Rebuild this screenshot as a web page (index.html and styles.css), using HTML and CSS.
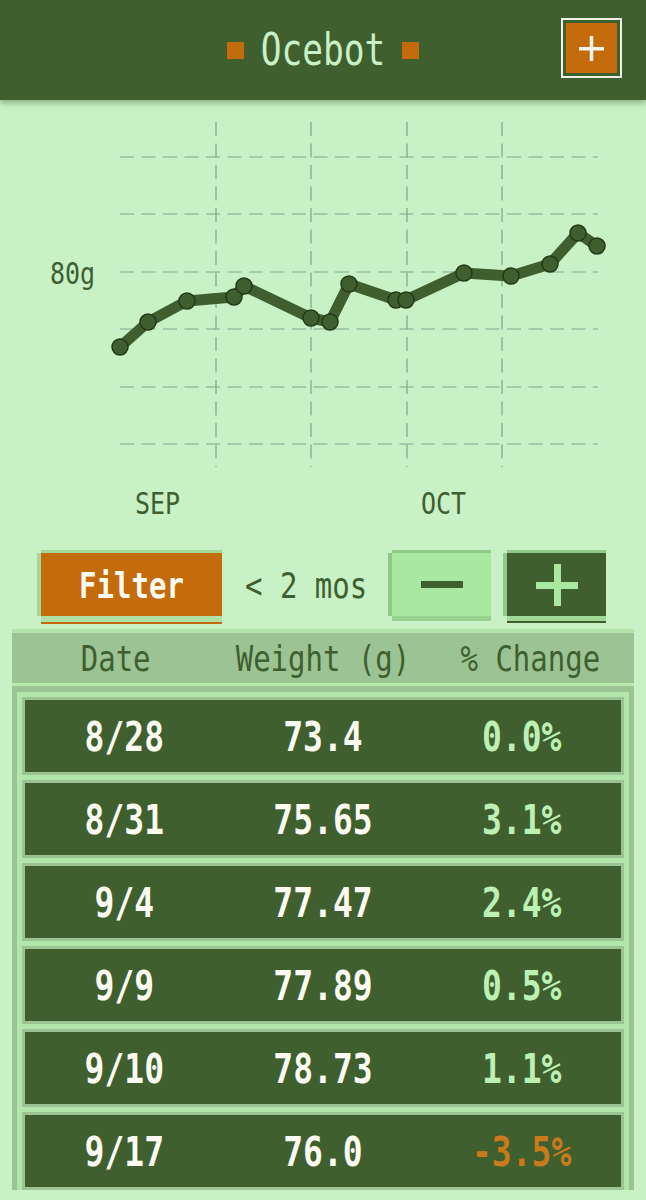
FILE: index.html
```html
<!DOCTYPE html>
<html lang="en">
<head>
    <meta charset="UTF-8">
    <meta name="viewport" content="width=device-width, initial-scale=1.0">
    <title>Ocebot</title>
    <link rel="stylesheet" href="styles.css">
</head>
<body>
    <header class="topbar">
        <div class="title">
            <span class="square"></span>
            <h1 class="title-text">Ocebot</h1>
            <span class="square"></span>
        </div>
        <button class="add-btn" type="button">
            <svg width="25" height="25" viewBox="0 0 25 25">
                <rect x="0" y="11" width="25" height="3.5" fill="#f4f4ec"/>
                <rect x="10.75" y="0" width="3.5" height="25" fill="#f4f4ec"/>
            </svg>
        </button>
    </header>

    <section class="chart">
        <svg width="646" height="448" viewBox="0 100 646 448">
            <g class="grid">
                <line x1="120" y1="157" x2="598" y2="157"/>
                <line x1="120" y1="214" x2="598" y2="214"/>
                <line x1="120" y1="272" x2="598" y2="272"/>
                <line x1="120" y1="329" x2="598" y2="329"/>
                <line x1="120" y1="387" x2="598" y2="387"/>
                <line x1="120" y1="444" x2="598" y2="444"/>
                <line x1="216" y1="122" x2="216" y2="467"/>
                <line x1="311" y1="122" x2="311" y2="467"/>
                <line x1="407" y1="122" x2="407" y2="467"/>
                <line x1="502" y1="122" x2="502" y2="467"/>
            </g>
            <text class="axis" transform="translate(50 284) scale(1 1.2)">80g</text>
            <text class="axis" transform="translate(135 514) scale(1 1.2)">SEP</text>
            <text class="axis" transform="translate(421 514) scale(1 1.2)">OCT</text>
            <polyline class="trend" points="120,347 148,322 187,301 234,297 244,286 311,318 330,322 349,284 396,300 406,300 464,273 511,276 550,264 578,233 597,246"/>
            <g class="dots">
                <circle cx="120" cy="347" r="8"/>
                <circle cx="148" cy="322" r="8"/>
                <circle cx="187" cy="301" r="8"/>
                <circle cx="234" cy="297" r="8"/>
                <circle cx="244" cy="286" r="8"/>
                <circle cx="311" cy="318" r="8"/>
                <circle cx="330" cy="322" r="8"/>
                <circle cx="349" cy="284" r="8"/>
                <circle cx="396" cy="300" r="8"/>
                <circle cx="406" cy="300" r="8"/>
                <circle cx="464" cy="273" r="8"/>
                <circle cx="511" cy="276" r="8"/>
                <circle cx="550" cy="264" r="8"/>
                <circle cx="578" cy="233" r="8"/>
                <circle cx="597" cy="246" r="8"/>
            </g>
        </svg>
    </section>

    <div class="controls">
        <button class="btn filter-btn" type="button"><span class="tall">Filter</span></button>
        <span class="range tall">&lt; 2 mos</span>
        <button class="btn minus-btn" type="button">
            <svg width="42" height="7" viewBox="0 0 42 7"><rect width="42" height="7" fill="#3f5f2f"/></svg>
        </button>
        <button class="btn plus-btn" type="button">
            <svg width="42" height="42" viewBox="0 0 42 42">
                <rect x="0" y="18" width="42" height="7" fill="#a8e8a0"/>
                <rect x="18" y="0" width="7" height="42" fill="#a8e8a0"/>
            </svg>
        </button>
    </div>

    <div class="table">
        <div class="thead">
            <span class="tall">Date</span>
            <span class="tall">Weight (g)</span>
            <span class="tall">% Change</span>
        </div>
        <div class="tbody">
            <div class="row">
                <span class="tall">8/28</span>
                <span class="tall">73.4</span>
                <span class="tall pct">0.0%</span>
            </div>
            <div class="row">
                <span class="tall">8/31</span>
                <span class="tall">75.65</span>
                <span class="tall pct">3.1%</span>
            </div>
            <div class="row">
                <span class="tall">9/4</span>
                <span class="tall">77.47</span>
                <span class="tall pct">2.4%</span>
            </div>
            <div class="row">
                <span class="tall">9/9</span>
                <span class="tall">77.89</span>
                <span class="tall pct">0.5%</span>
            </div>
            <div class="row">
                <span class="tall">9/10</span>
                <span class="tall">78.73</span>
                <span class="tall pct">1.1%</span>
            </div>
            <div class="row">
                <span class="tall">9/17</span>
                <span class="tall">76.0</span>
                <span class="tall pct neg">-3.5%</span>
            </div>
        </div>
    </div>
</body>
</html>
```

FILE: styles.css
```css
body {
    margin: 0;
    background-color: #c8f1c6;
    font-family: "DejaVu Sans Mono", monospace;
    color: #3f5f2f;
}
.tall {
    display: inline-block;
    transform: scaleY(1.25);
}
.topbar {
    position: relative;
    z-index: 1;
    height: 100px;
    display: grid;
    grid-template-columns: 1fr auto 1fr;
    align-items: center;
    background-color: #3f5f2f;
    box-shadow: 0 3px 6px rgba(30, 60, 20, 0.35);
}
.title {
    grid-column: 2;
    display: flex;
    align-items: center;
    gap: 17px;
}
.square {
    width: 17px;
    height: 17px;
    background-color: #c46c0c;
}
.title-text {
    margin: 0;
    font-size: 34.5px;
    font-weight: normal;
    line-height: 1;
    color: #c8f1c6;
    display: inline-block;
    transform: scaleY(1.27);
}
.add-btn {
    grid-column: 3;
    justify-self: end;
    margin: -4px 24px 0 0;
    box-sizing: border-box;
    width: 61px;
    height: 60px;
    padding: 0;
    border: 2px solid #eef2e6;
    background-color: #c46c0c;
    box-shadow: inset 0 0 0 3px #3f5f2f;
    display: flex;
    align-items: center;
    justify-content: center;
}
.chart svg {
    display: block;
}
.grid line {
    stroke: #7fa48c;
    stroke-width: 1.2;
    stroke-dasharray: 14 7.5;
}
.axis {
    font-family: "DejaVu Sans Mono", monospace;
    font-size: 25px;
    fill: #3f5f2f;
}
.trend {
    fill: none;
    stroke: #3f5f2f;
    stroke-width: 11;
    stroke-linejoin: round;
    stroke-linecap: round;
}
.dots circle {
    fill: #3f5f2f;
    stroke: #223a18;
    stroke-width: 1.5;
}
.controls {
    display: flex;
    align-items: center;
    padding: 5px 0 0 41px;
}
.btn {
    box-sizing: border-box;
    height: 63px;
    padding: 0;
    border: none;
    font-family: inherit;
    display: flex;
    align-items: center;
    justify-content: center;
}
.filter-btn {
    width: 181px;
    background-color: #c46c0c;
    color: #fbfbf2;
    font-size: 29px;
    font-weight: bold;
    box-shadow: -4px 0 0 #a2d89a, 0 -3px 0 #a2d89a, 0 6px 0 #b0e2a6, 0 8px 0 #c46c0c;
}
.range {
    margin-left: 23px;
    font-size: 29px;
}
.minus-btn {
    margin-left: 25px;
    width: 99px;
    background-color: #a8e8a0;
    box-shadow: -4px 0 0 #90c888, 0 -3px 0 #90c888, 0 5px 0 #98d090;
}
.plus-btn {
    margin-left: 16px;
    width: 99px;
    background-color: #3f5f2f;
    box-shadow: -4px 0 0 #90c888, 0 -3px 0 #90c888, 0 5px 0 #a0d898, 0 7px 0 #3f5f2f;
}
.table {
    margin: 13px 12px 0;
}
.thead {
    height: 50px;
    display: grid;
    grid-template-columns: repeat(3, 1fr);
    align-items: center;
    text-align: center;
    background-color: #9bc393;
    border-top: 4px solid #b2e4aa;
    border-bottom: 3px solid #b8eab0;
    font-size: 29px;
}
.tbody {
    background-color: #9bc393;
    padding: 14px 13px 3px;
    display: flex;
    flex-direction: column;
    gap: 11px;
}
.row {
    height: 72px;
    display: grid;
    grid-template-columns: repeat(3, 1fr);
    align-items: center;
    text-align: center;
    background-color: #3f5f2f;
    box-shadow: 0 0 0 3px #9bc393, 0 0 0 8px #b2e6aa;
    font-size: 33px;
    font-weight: bold;
    color: #fbfbf2;
}
.pct {
    color: #bdf0b4;
}
.neg {
    color: #c97a1a;
}
```
